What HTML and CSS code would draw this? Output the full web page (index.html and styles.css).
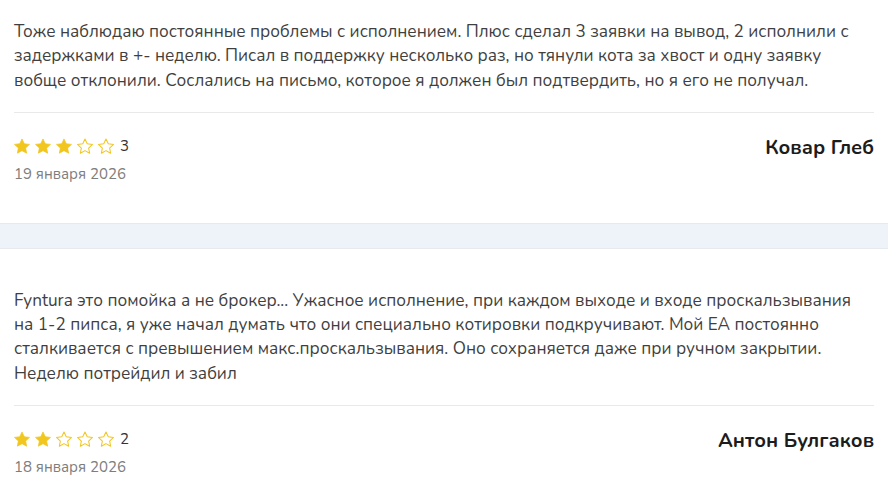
FILE: index.html
```html
<!DOCTYPE html>
<html lang="ru">
<head>
<meta charset="utf-8">
<link rel="stylesheet" href="styles.css">
</head>
<body>
<div class="feed">
  <article class="review">
    <p class="review-text">Тоже наблюдаю постоянные проблемы с исполнением. Плюс сделал 3 заявки на вывод, 2 исполнили с задержками в +- неделю. Писал в поддержку несколько раз, но тянули кота за хвост и одну заявку вобще отклонили. Сослались на письмо, которое я должен был подтвердить, но я его не получал.</p>
    <div class="review-meta">
      <div class="meta-left">
        <div class="rating">
          <svg class="star full" viewBox="1 1 22 21"><path d="M12 1.8l3.1 6.6 7.2.9-5.3 5 1.4 7.1L12 17.9l-6.4 3.5 1.4-7.1-5.3-5 7.2-.9z"/></svg>
          <svg class="star full" viewBox="1 1 22 21"><path d="M12 1.8l3.1 6.6 7.2.9-5.3 5 1.4 7.1L12 17.9l-6.4 3.5 1.4-7.1-5.3-5 7.2-.9z"/></svg>
          <svg class="star full" viewBox="1 1 22 21"><path d="M12 1.8l3.1 6.6 7.2.9-5.3 5 1.4 7.1L12 17.9l-6.4 3.5 1.4-7.1-5.3-5 7.2-.9z"/></svg>
          <svg class="star empty" viewBox="1 1 22 21"><path d="M12 1.8l3.1 6.6 7.2.9-5.3 5 1.4 7.1L12 17.9l-6.4 3.5 1.4-7.1-5.3-5 7.2-.9z"/></svg>
          <svg class="star empty" viewBox="1 1 22 21"><path d="M12 1.8l3.1 6.6 7.2.9-5.3 5 1.4 7.1L12 17.9l-6.4 3.5 1.4-7.1-5.3-5 7.2-.9z"/></svg>
          <span class="rating-value">3</span>
        </div>
        <div class="date">19 января 2026</div>
      </div>
      <div class="author">Ковар Глеб</div>
    </div>
  </article>
  <div class="separator"></div>
  <article class="review">
    <p class="review-text">Fyntura это помойка а не брокер... Ужасное исполнение, при каждом выходе и входе проскальзывания на 1-2 пипса, я уже начал думать что они специально котировки подкручивают. Мой ЕА постоянно сталкивается с превышением макс.проскальзывания. Оно сохраняется даже при ручном закрытии. Неделю потрейдил и забил</p>
    <div class="review-meta">
      <div class="meta-left">
        <div class="rating">
          <svg class="star full" viewBox="1 1 22 21"><path d="M12 1.8l3.1 6.6 7.2.9-5.3 5 1.4 7.1L12 17.9l-6.4 3.5 1.4-7.1-5.3-5 7.2-.9z"/></svg>
          <svg class="star full" viewBox="1 1 22 21"><path d="M12 1.8l3.1 6.6 7.2.9-5.3 5 1.4 7.1L12 17.9l-6.4 3.5 1.4-7.1-5.3-5 7.2-.9z"/></svg>
          <svg class="star empty" viewBox="1 1 22 21"><path d="M12 1.8l3.1 6.6 7.2.9-5.3 5 1.4 7.1L12 17.9l-6.4 3.5 1.4-7.1-5.3-5 7.2-.9z"/></svg>
          <svg class="star empty" viewBox="1 1 22 21"><path d="M12 1.8l3.1 6.6 7.2.9-5.3 5 1.4 7.1L12 17.9l-6.4 3.5 1.4-7.1-5.3-5 7.2-.9z"/></svg>
          <svg class="star empty" viewBox="1 1 22 21"><path d="M12 1.8l3.1 6.6 7.2.9-5.3 5 1.4 7.1L12 17.9l-6.4 3.5 1.4-7.1-5.3-5 7.2-.9z"/></svg>
          <span class="rating-value">2</span>
        </div>
        <div class="date">18 января 2026</div>
      </div>
      <div class="author">Антон Булгаков</div>
    </div>
  </article>
</div>
</body>
</html>
```

FILE: styles.css
```css
html, body {
  margin: 0;
  padding: 0;
  background: #ffffff;
  overflow: hidden;
}
body {
  font-family: "Nunito", "Lato", "Noto Sans", sans-serif;
  color: #3f3f3f;
}
.feed {
  margin-top: -20px;
}
.review {
  padding: 40px 14px 39px;
}
.review-text {
  margin: 0;
  padding-bottom: 19px;
  border-bottom: 1px solid #e9e9e9;
  font-size: 17.2px;
  line-height: 24.3px;
}
.review-meta {
  display: flex;
  justify-content: space-between;
  align-items: flex-start;
  padding-top: 23px;
}
.meta-left {
  display: flex;
  flex-direction: column;
  gap: 8px;
}
.rating {
  display: flex;
  align-items: center;
  gap: 5px;
  height: 20px;
}
.star {
  width: 16px;
  height: 16px;
}
.star.full path {
  fill: #f1c61f;
  stroke: #f1c61f;
  stroke-width: 1;
  stroke-linejoin: round;
}
.star.empty path {
  fill: none;
  stroke: #f1c61f;
  stroke-width: 1.4;
  stroke-linejoin: round;
}
.rating-value {
  font-size: 15px;
  color: #333;
  margin-left: 1px;
}
.date {
  font-size: 15px;
  line-height: 20px;
  color: #7d7d7d;
}
.author {
  font-size: 20px;
  font-weight: 700;
  color: #1c1c1c;
  line-height: 24px;
}
.separator {
  height: 24px;
  background: #eef3fa;
  border-top: 1px solid #e6e9ee;
  border-bottom: 1px solid #e6e9ee;
}
```
